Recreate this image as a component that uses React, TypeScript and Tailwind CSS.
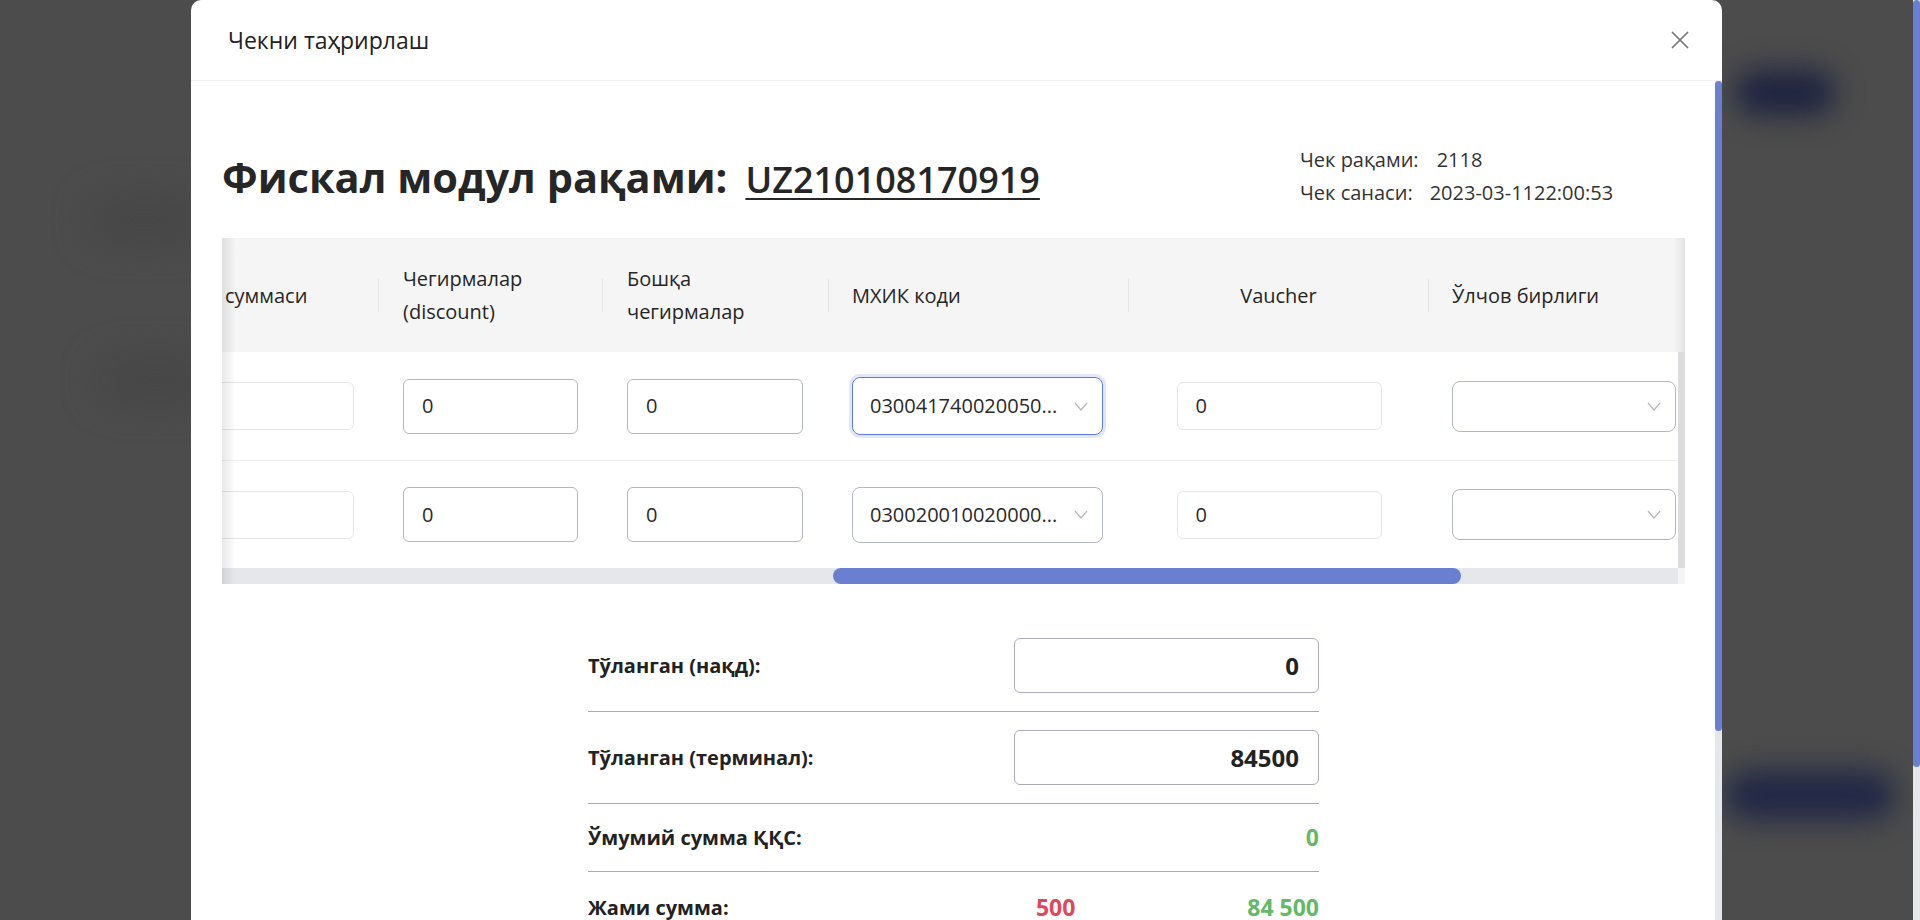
import { X } from "lucide-react";

function Chevron() {
  return (
    <svg width="14" height="9" viewBox="0 0 14 9" fill="none" stroke="#b8b8b8" strokeWidth="1.2">
      <path d="M1 1l6 7 6-7" />
    </svg>
  );
}

function HeadDivider() {
  return <div className="h-[33px] w-px shrink-0 bg-[#e4e4e4]" />;
}

function Select({ value, w, h, focused }: { value: string; w: string; h: string; focused?: boolean }) {
  return (
    <div
      className={`flex items-center justify-between rounded-[8px] border pl-[17px] pr-[14px] text-[20px] text-[#2a2a2a] ${w} ${h} ${
        focused ? "border-[#5b7be0] shadow-[0_0_0_3px_rgba(91,123,224,0.18)]" : "border-[#b3b5c8]"
      }`}
    >
      <span className="truncate">{value}</span>
      <Chevron />
    </div>
  );
}

const rows = [
  { code: "030041740020050...", focused: true },
  { code: "030020010020000...", focused: false },
];

export default function App() {
  return (
    <div className="relative flex h-[920px] w-full overflow-hidden bg-[#4c4c4c] font-['Open_Sans',sans-serif]">
      {/* blurred page behind overlay */}
      <div className="absolute left-[1735px] top-[70px] h-[45px] w-[100px] rounded-full bg-[#1e2340] blur-[14px]" />
      <div className="absolute left-[1725px] top-[770px] h-[50px] w-[170px] rounded-full bg-[#222846] blur-[14px]" />
      <div className="absolute left-[90px] top-[200px] h-[40px] w-[110px] rounded-full bg-[#464646] blur-[18px]" />
      <div className="absolute left-[100px] top-[360px] h-[40px] w-[110px] rounded-full bg-[#464646] blur-[18px]" />

      <div className="relative flex flex-1 justify-center">
        <div className="flex w-[1531px] flex-col rounded-t-[10px] bg-white">
          {/* header */}
          <div className="flex h-[81px] shrink-0 items-center justify-between border-b border-[#f0f0f0] pl-[37px] pr-[27px]">
            <div className="text-[23px] text-[#222]">Чекни таҳрирлаш</div>
            <X size={30} strokeWidth={1.4} color="#777" />
          </div>

          <div className="flex flex-1">
            <div className="flex-1 pl-[31px] pr-[30px] pt-[62px]">
              {/* heading */}
              <div className="mb-[25px] flex items-center">
                <div className="flex flex-1 items-baseline">
                  <h1 className="text-[41.5px] font-bold leading-[54px] text-[#262626]">Фискал модул рақами:</h1>
                  <span className="ml-[18px] text-[36px] font-semibold text-[#262626] underline decoration-[2px] underline-offset-[5px]">
                    UZ210108170919
                  </span>
                </div>
                <div className="mb-[4px] w-[385px] text-[20px] leading-[33px] text-[#333]">
                  <div>
                    Чек рақами:<span className="ml-[18px]">2118</span>
                  </div>
                  <div>
                    Чек санаси:<span className="ml-[17px]">2023-03-1122:00:53</span>
                  </div>
                </div>
              </div>

              {/* table */}
              <div className="relative overflow-hidden">
                <div className="flex h-[114px] items-center bg-[#f5f5f5] text-[20px] leading-[33px] text-[#262626]">
                  <div className="w-[156px] shrink-0 pl-[3px]">суммаси</div>
                  <HeadDivider />
                  <div className="w-[223px] shrink-0 pl-[24px]">
                    Чегирмалар
                    <br />
                    (discount)
                  </div>
                  <HeadDivider />
                  <div className="w-[225px] shrink-0 pl-[24px]">
                    Бошқа
                    <br />
                    чегирмалар
                  </div>
                  <HeadDivider />
                  <div className="w-[299px] shrink-0 pl-[23px]">МХИК коди</div>
                  <HeadDivider />
                  <div className="w-[299px] shrink-0 text-center">Vaucher</div>
                  <HeadDivider />
                  <div className="flex-1 pl-[23px]">Ўлчов бирлиги</div>
                </div>

                <div className="flex">
                  <div className="flex-1">
                    {rows.map((r, i) => (
                      <div
                        key={i}
                        className={`flex items-center text-[20px] text-[#2a2a2a] ${i === 0 ? "h-[109px] border-b border-[#f0f0f0]" : "h-[107px]"}`}
                      >
                        <div className="flex w-[157px] shrink-0 justify-end overflow-hidden pr-[25px]">
                          <div className="h-[48px] w-[175px] shrink-0 rounded-[6px] border border-[#e6e6e6]" />
                        </div>
                        <div className="w-[224px] shrink-0 pl-[24px]">
                          <div className="flex h-[55px] w-[175px] items-center rounded-[6px] border border-[#b3b5c8] pl-[18px]">0</div>
                        </div>
                        <div className="w-[226px] shrink-0 pl-[24px]">
                          <div className="flex h-[55px] w-[176px] items-center rounded-[6px] border border-[#b3b5c8] pl-[18px]">0</div>
                        </div>
                        <div className="w-[300px] shrink-0 pl-[23px]">
                          <Select value={r.code} w="w-[251px]" h={r.focused ? "h-[58px]" : "h-[56px]"} focused={r.focused} />
                        </div>
                        <div className="flex w-[300px] shrink-0 justify-center">
                          <div className="flex h-[48px] w-[205px] items-center rounded-[6px] border border-[#e6e6e6] pl-[18px]">0</div>
                        </div>
                        <div className="flex-1 pl-[23px]">
                          <Select value="" w="w-[224px]" h="h-[51px]" />
                        </div>
                      </div>
                    ))}
                  </div>
                  <div className="w-[7px] shrink-0 bg-[#dcdce0]" />
                </div>

                {/* horizontal scrollbar */}
                <div className="flex h-[16px]">
                  <div className="flex-1 bg-[#e6e7eb]">
                    <div className="ml-[611px] h-[16px] w-[628px] rounded-full bg-[#6b7fd0]" />
                  </div>
                  <div className="w-[7px] bg-[#f4f4f6]" />
                </div>

                {/* fixed column shadows */}
                <div className="pointer-events-none absolute bottom-0 left-0 top-0 w-[14px] bg-gradient-to-r from-[rgba(0,0,0,0.09)] to-transparent" />
                <div className="pointer-events-none absolute right-0 top-0 h-[114px] w-[12px] bg-gradient-to-l from-[rgba(0,0,0,0.07)] to-transparent" />
              </div>

              {/* summary */}
              <div className="mx-auto mt-[36px] w-[731px] text-[20px] font-bold text-[#222]">
                <div className="flex items-center justify-between border-b border-[#a9abba] py-[18px]">
                  <span>Тўланган (нақд):</span>
                  <div className="flex h-[55px] w-[305px] items-center justify-end rounded-[6px] border border-[#a9abba] pr-[19px] text-[24px]">
                    0
                  </div>
                </div>
                <div className="flex items-center justify-between border-b border-[#a9abba] py-[18px]">
                  <span>Тўланган (терминал):</span>
                  <div className="flex h-[55px] w-[305px] items-center justify-end rounded-[6px] border border-[#a9abba] pr-[19px] text-[24px]">
                    84500
                  </div>
                </div>
                <div className="flex items-center justify-between border-b border-[#a9abba] py-[20px] leading-[27px]">
                  <span>Ўмумий сумма ҚҚС:</span>
                  <span className="text-[23px] text-[#63b967]">0</span>
                </div>
                <div className="grid grid-cols-3 py-[22px] leading-[27px]">
                  <span>Жами сумма:</span>
                  <span className="text-right text-[23px] text-[#e0475b]">500</span>
                  <span className="text-right text-[23px] text-[#63b967]">84 500</span>
                </div>
              </div>
            </div>

            {/* modal scrollbar */}
            <div className="w-[7px] shrink-0 bg-[#e6e7eb]">
              <div className="h-[650px] w-[7px] rounded-full bg-[#6b7fd0]" />
            </div>
          </div>
        </div>
      </div>

      {/* page scrollbar */}
      <div className="relative w-[7px] shrink-0 bg-[#e6e7eb]">
        <div className="h-[767px] w-[7px] rounded-full bg-[#6b7fd0]" />
      </div>
    </div>
  );
}
